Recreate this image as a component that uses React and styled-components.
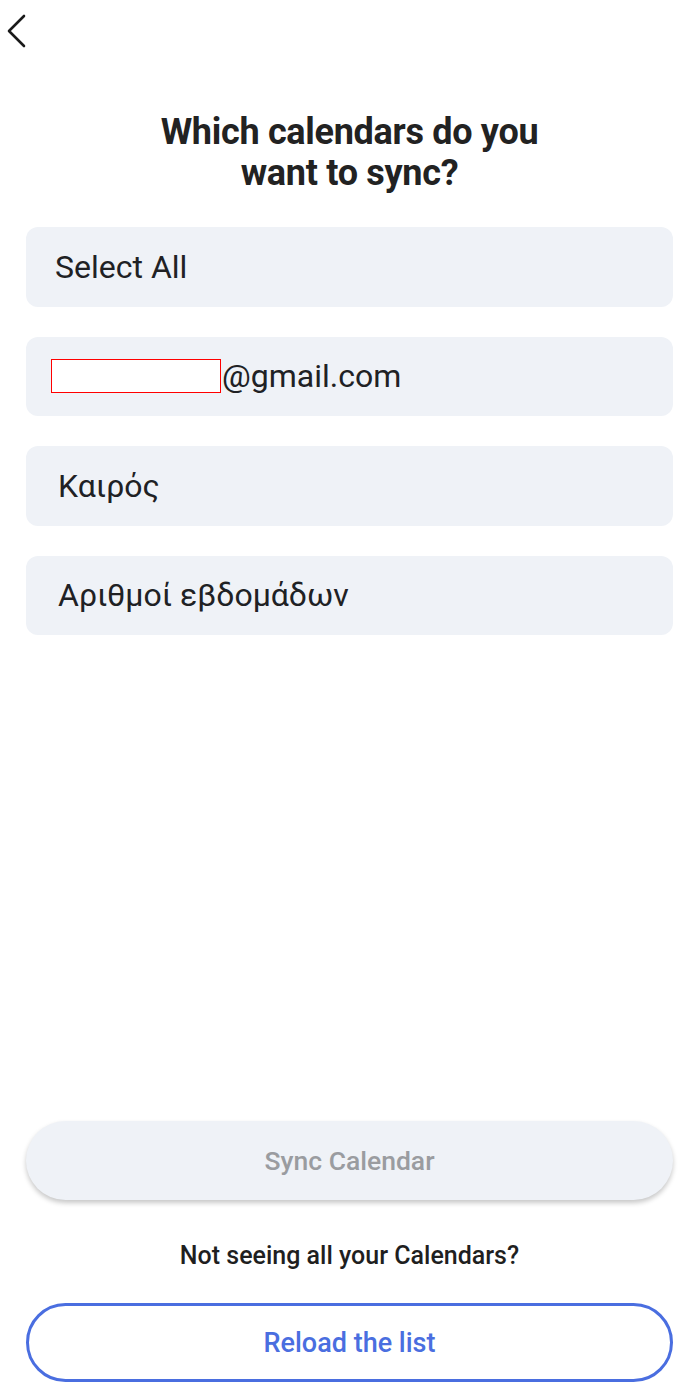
import styled, { createGlobalStyle } from "styled-components";

const GlobalStyle = createGlobalStyle`
  html, body {
    margin: 0;
    padding: 0;
    background: #ffffff;
  }
  body {
    font-family: Roboto, "Noto Sans", Arial, sans-serif;
    color: #1f1f1f;
  }
`;

const Screen = styled.div`
  min-height: 1388px;
  display: flex;
  flex-direction: column;
  box-sizing: border-box;
  padding: 0 27px 6px 26px;
`;

const TopBar = styled.div`
  height: 62px;
  margin-left: -26px;
  display: flex;
  align-items: flex-start;
  padding-top: 14px;
  box-sizing: border-box;
`;

const BackButton = styled.button`
  border: 0;
  background: none;
  padding: 0 0 0 1px;
  width: 32px;
  height: 36px;
  cursor: pointer;
`;

const Title = styled.h1`
  margin: 50px 0 33px;
  text-align: center;
  font-size: 36px;
  line-height: 41px;
  font-weight: 700;
  color: #222222;
  letter-spacing: -0.3px;
`;

const List = styled.div`
  display: flex;
  flex-direction: column;
  gap: 30px;
`;

const Row = styled.div`
  height: 79.5px;
  border-radius: 12px;
  background: #eff2f7;
  display: flex;
  align-items: center;
  padding-left: ${(p) => p.$indent || 29}px;
  font-size: 32px;
  color: #202124;
`;

const Masked = styled.span`
  display: inline-block;
  width: 168px;
  height: 32px;
  border: 1px solid #ff0000;
  background: #ffffff;
  margin-right: 1px;
`;

const Spacer = styled.div`
  flex: 1;
`;

const SyncButton = styled.button`
  height: 79px;
  width: 100%;
  border: 0;
  border-radius: 40px;
  background: #eff2f7;
  box-shadow: 0 3px 5px rgba(0, 0, 0, 0.22);
  font-family: Roboto, Arial, sans-serif;
  font-size: 26.5px;
  font-weight: 500;
  color: #9a9ca0;
`;

const Hint = styled.p`
  margin: 41px 0 32px;
  text-align: center;
  font-size: 25px;
  line-height: 30px;
  font-weight: 500;
  color: #1f1f1f;
`;

const ReloadButton = styled.button`
  height: 79px;
  width: 100%;
  border: 3px solid #4a6ee0;
  border-radius: 40px;
  background: #ffffff;
  font-family: Roboto, Arial, sans-serif;
  font-size: 27px;
  font-weight: 500;
  color: #4a6ee0;
`;

const calendars = [
  { label: "Select All", indent: 29 },
  { label: "@gmail.com", indent: 25, masked: true },
  { label: "Καιρός", indent: 32 },
  { label: "Αριθμοί εβδομάδων", indent: 32 },
];

export default function App() {
  return (
    <>
      <GlobalStyle />
      <Screen>
        <TopBar>
          <BackButton aria-label="back">
            <svg width="22" height="34" viewBox="0 0 22 34">
              <polyline
                points="18,2 3,17 18,32"
                fill="none"
                stroke="#1a1a1a"
                strokeWidth="2.6"
                strokeLinecap="round"
                strokeLinejoin="round"
              />
            </svg>
          </BackButton>
        </TopBar>
        <Title>
          Which calendars do you
          <br />
          want to sync?
        </Title>
        <List>
          {calendars.map((c) => (
            <Row key={c.label} $indent={c.indent}>
              {c.masked && <Masked />}
              {c.label}
            </Row>
          ))}
        </List>
        <Spacer />
        <SyncButton>Sync Calendar</SyncButton>
        <Hint>Not seeing all your Calendars?</Hint>
        <ReloadButton>Reload the list</ReloadButton>
      </Screen>
    </>
  );
}
